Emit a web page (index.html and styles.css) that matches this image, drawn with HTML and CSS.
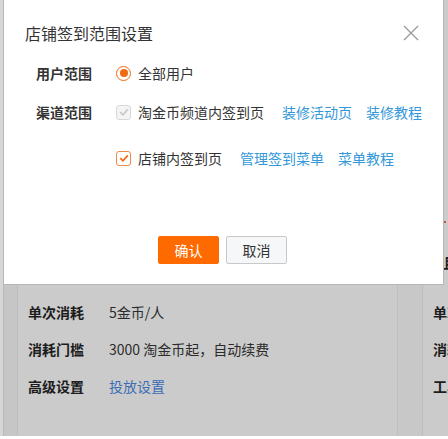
FILE: index.html
```html
<!DOCTYPE html>
<html lang="zh-CN">
<head>
<meta charset="utf-8">
<link rel="stylesheet" href="styles.css">
</head>
<body>
<div class="page">
  <div class="strip"></div>
  <div class="gutter"></div>
  <div class="card">
    <div class="card-body">
      <div class="info-row"><span class="info-label">单次消耗</span><span class="info-value">5金币/人</span></div>
      <div class="info-row"><span class="info-label">消耗门槛</span><span class="info-value">3000 淘金币起，自动续费</span></div>
      <div class="info-row"><span class="info-label">高级设置</span><a class="info-link">投放设置</a></div>
    </div>
  </div>
  <div class="gap"></div>
  <div class="card card-right">
    <div class="right-top">
      <span class="hot"></span>
      <span class="peek">且</span>
    </div>
    <div class="card-body">
      <div class="info-row"><span class="info-label">单次消耗</span></div>
      <div class="info-row"><span class="info-label">消耗门槛</span></div>
      <div class="info-row"><span class="info-label">工具设置</span></div>
    </div>
  </div>

  <div class="modal">
    <div class="modal-header">
      <h2 class="modal-title">店铺签到范围设置</h2>
      <svg class="close" width="16" height="16" viewBox="0 0 16 16"><path d="M1 1L15 15M15 1L1 15" stroke="#9a9a9a" stroke-width="1.3" fill="none"/></svg>
    </div>
    <div class="form">
      <div class="form-row">
        <span class="form-label">用户范围</span>
        <div class="form-field">
          <div class="option">
            <span class="radio"><span class="radio-dot"></span></span>
            <span class="option-text">全部用户</span>
          </div>
        </div>
      </div>
      <div class="form-row">
        <span class="form-label">渠道范围</span>
        <div class="form-field column">
          <div class="option">
            <span class="checkbox disabled"><svg width="12" height="12" viewBox="0 0 12 12"><path d="M2.2 6.2L4.9 8.8L9.8 3.4" stroke="#c8c8c8" stroke-width="1.6" fill="none"/></svg></span>
            <span class="option-text">淘金币频道内签到页</span>
            <a class="link">装修活动页</a>
            <a class="link">装修教程</a>
          </div>
          <div class="option second">
            <span class="checkbox checked"><svg width="12" height="12" viewBox="0 0 12 12"><path d="M2.2 6.2L4.9 8.8L9.8 3.4" stroke="#f06a14" stroke-width="1.7" fill="none"/></svg></span>
            <span class="option-text">店铺内签到页</span>
            <a class="link">管理签到菜单</a>
            <a class="link">菜单教程</a>
          </div>
        </div>
      </div>
    </div>
    <div class="actions">
      <button class="btn btn-primary">确认</button>
      <button class="btn btn-default">取消</button>
    </div>
  </div>
</div>
</body>
</html>
```

FILE: styles.css
```css
html, body {
  margin: 0;
  padding: 0;
  background: #ffffff;
}
body {
  font-family: "Noto Sans CJK SC", "Noto Sans", sans-serif;
  font-size: 14px;
  color: #333;
}
.page {
  position: relative;
  display: flex;
  height: 436px;
  width: 448px;
  overflow: hidden;
  background: #cbcbcb;
}
.strip {
  flex: none;
  width: 3px;
  background: #d6d6d6;
  border-right: 1px solid #b9b9b9;
}
.gutter {
  flex: none;
  width: 13px;
  background: #c6c6c6;
}
.card {
  flex: none;
  width: 379px;
  background: #cbcbcb;
  border-left: 1px solid #bdbdbd;
  border-right: 1px solid #c0c0c0;
  display: flex;
  flex-direction: column;
}
.card-body {
  margin-top: 302px;
  padding-left: 10px;
  display: flex;
  flex-direction: column;
  gap: 17px;
}
.info-row {
  display: flex;
  line-height: 20px;
  height: 20px;
  white-space: nowrap;
}
.info-label {
  flex: none;
  width: 81px;
  font-weight: bold;
  color: #1c1c1c;
}
.info-value {
  color: #2b2b2b;
}
.info-link {
  color: #3b6db5;
}
.gap {
  flex: none;
  width: 24px;
  background: #c8c8c8;
}
.card-right {
  flex: 1 1 0;
  width: auto;
  min-width: 0;
  overflow: hidden;
  border-right: none;
}
.card-right .card-body {
  margin-top: 0;
}
.right-top {
  height: 302px;
  position: relative;
  flex: none;
}
.hot {
  position: absolute;
  left: 20px;
  top: 221px;
  width: 3px;
  height: 2px;
  background: #c9524a;
}
.peek {
  position: absolute;
  left: 20px;
  top: 252px;
  font-size: 14px;
  line-height: 20px;
  font-weight: bold;
  color: #1c1c1c;
}

/* modal overlay */
.modal {
  position: absolute;
  left: 4px;
  top: 0;
  width: 439px;
  height: 284px;
  box-sizing: border-box;
  background: #fff;
  box-shadow: 0 0 0 1px #b7b7b7;
  padding: 21px 25px 20px 21px;
  display: flex;
  flex-direction: column;
}
.modal-header {
  display: flex;
  justify-content: space-between;
  align-items: center;
  height: 24px;
}
.modal-title {
  margin: 0;
  font-size: 16px;
  font-weight: normal;
  line-height: 24px;
  color: #333;
}
.close {
  display: block;
  margin-right: -1px;
}
.form {
  margin-top: 18px;
  padding-left: 11px;
  display: flex;
  flex-direction: column;
  gap: 19px;
}
.form-row {
  display: flex;
  align-items: flex-start;
}
.form-label {
  width: 80px;
  line-height: 20px;
  font-weight: bold;
  color: #333;
  flex: none;
}
.form-field {
  display: flex;
}
.form-field.column {
  flex-direction: column;
  gap: 26px;
}
.option {
  display: flex;
  align-items: center;
  height: 20px;
  line-height: 20px;
  white-space: nowrap;
}
.option-text {
  margin-left: 7px;
  margin-right: 4px;
  color: #333;
}
.link {
  margin-left: 14px;
  color: #3498db;
}
.radio {
  width: 15px;
  height: 15px;
  box-sizing: border-box;
  border: 1.5px solid #f06a14;
  border-radius: 50%;
  display: flex;
  align-items: center;
  justify-content: center;
}
.radio-dot {
  width: 8px;
  height: 8px;
  border-radius: 50%;
  background: #f06a14;
}
.checkbox {
  width: 15px;
  height: 15px;
  box-sizing: border-box;
  border-radius: 3px;
  display: flex;
  align-items: center;
  justify-content: center;
}
.checkbox svg {
  display: block;
}
.checkbox.disabled {
  border: 1px solid #d9d9d9;
  background: #f4f4f4;
}
.checkbox.checked {
  border: 1.5px solid #f08a4a;
  background: #fff;
}
.actions {
  margin-top: auto;
  display: flex;
  justify-content: center;
  gap: 7px;
  padding-left: 2px;
}
.btn {
  width: 61px;
  height: 28px;
  box-sizing: border-box;
  border-radius: 2px;
  font-family: "Noto Sans CJK SC", sans-serif;
  font-size: 14px;
  line-height: 26px;
  padding: 0;
  cursor: pointer;
}
.btn-primary {
  background: #ff6a00;
  border: 1px solid #ff6a00;
  color: #fff;
}
.btn-default {
  background: #f6f7f9;
  border: 1px solid #c9c9c9;
  color: #333;
}
```
